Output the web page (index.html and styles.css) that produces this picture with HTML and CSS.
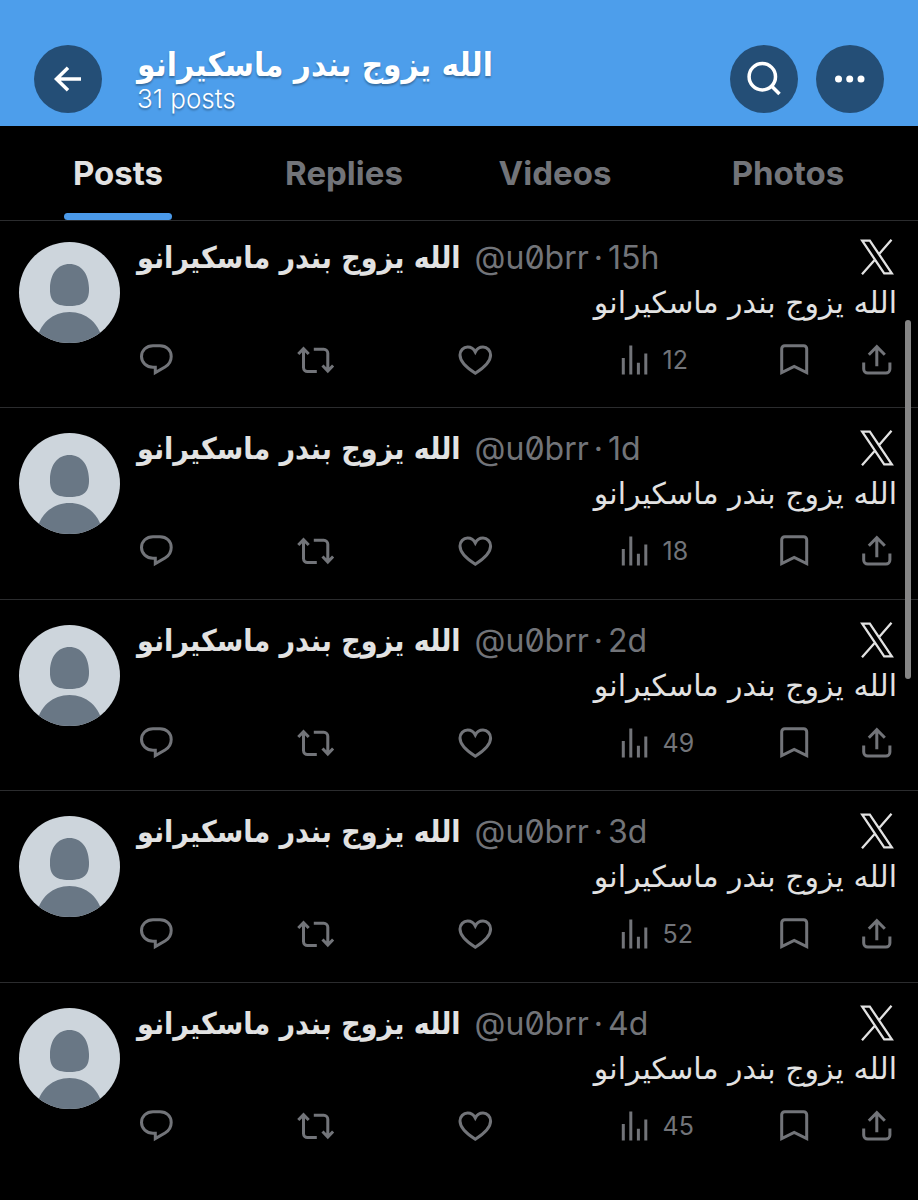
FILE: index.html
```html
<!DOCTYPE html>
<html lang="en">
<head>
    <meta charset="UTF-8">
    <meta name="viewport" content="width=device-width, initial-scale=1.0">
    <title>Profile posts</title>
    <link rel="stylesheet" href="styles.css">
</head>
<body>
    <svg class="sprite" aria-hidden="true">
        <symbol id="avatar" viewBox="0 0 101 101">
            <rect width="101" height="101" fill="#cdd5dc"/>
            <path fill="#697785" d="M50.500 22C62 22 69.500 31 70 46C70.400 58 66 64 50.500 64S30.600 58 31 46C31.500 31 39 22 50.500 22z"/>
            <path fill="#697785" d="M17 101C20 81 34 70 50.500 70S81 81 84 101z"/>
        </symbol>
        <symbol id="x-logo" viewBox="0 0 34 36">
            <path fill="none" stroke="currentColor" stroke-width="2.300" d="M2.200 1.600H9.800L31.800 34.400H24.200ZM31.500 0.800L18.700 15.600M15.300 20.300L2 35.200"/>
        </symbol>
        <symbol id="reply" viewBox="0 0 38 38">
            <path d="M18.300 26.200H16C9.500 26.200 4.500 21.500 4.500 15.500C4.500 9.300 9.500 4.700 16 4.700H23C29.600 4.700 34.200 9.300 34.200 15.400C34.200 20 32 23.500 28 26L18.300 31.600Z"/>
        </symbol>
        <symbol id="repost" viewBox="0 0 38 38">
            <path d="M1.300 13L6.500 7.600L11.700 13M6.500 8V26.500A4 4 0 0 0 10.500 30.500H19.800M16.800 8.300H26.800A4 4 0 0 1 30.800 12.300V30M25.500 24.500L30.800 30L36.100 24.500"/>
        </symbol>
        <symbol id="like" viewBox="0 0 38 38">
            <path d="M19.300 32.200C11.300 27.200 4 21 4 14C4 9.400 7.400 6.100 11.600 6.100C15 6.100 17.800 8 19.300 11C20.800 8 23.600 6.100 27 6.100C31.200 6.100 34.600 9.400 34.600 14C34.600 21 27.300 27.200 19.300 32.200Z"/>
        </symbol>
        <symbol id="views" viewBox="0 0 38 38">
            <path d="M7.300 17V33.500M14.800 4.500V33.500M22.400 21.800V33.500M29.800 12.500V33.500"/>
        </symbol>
        <symbol id="bookmark" viewBox="0 0 38 38">
            <path d="M6.700 31.500V7.700A3 3 0 0 1 9.700 4.700H28.700A3 3 0 0 1 31.700 7.700V31.500L19.200 25.500Z"/>
        </symbol>
        <symbol id="share" viewBox="0 0 38 38">
            <path d="M18.800 25.200V6M10.800 13.700L18.800 5.700L26.800 13.700M5.700 21.500V28A4 4 0 0 0 9.700 32H27.900A4 4 0 0 0 31.900 28V21.500"/>
        </symbol>
    </svg>

    <header class="header">
        <button class="round-btn" aria-label="Back">
            <svg viewBox="0 0 68 68"><path d="M47 34H22M34 22.800L22.500 34L34 45.200"/></svg>
        </button>
        <div class="header-title">
            <h1 dir="rtl" lang="ar">الله يزوج بندر ماسكيرانو</h1>
            <p>31 posts</p>
        </div>
        <button class="round-btn" aria-label="Search">
            <svg viewBox="0 0 68 68"><circle cx="32.300" cy="31.700" r="13.200"/><path d="M41.500 41L49.500 49"/></svg>
        </button>
        <button class="round-btn" aria-label="More">
            <svg viewBox="0 0 68 68" class="dots"><circle cx="22.500" cy="34" r="3.500"/><circle cx="33.700" cy="34" r="3.500"/><circle cx="45" cy="34" r="3.500"/></svg>
        </button>
    </header>

    <nav class="tabs" role="tablist">
        <button class="tab active" role="tab" aria-selected="true">Posts</button>
        <button class="tab" role="tab" aria-selected="false">Replies</button>
        <button class="tab" role="tab" aria-selected="false">Videos</button>
        <button class="tab" role="tab" aria-selected="false">Photos</button>
    </nav>

    <main id="timeline" class="timeline"></main>
    <div class="scroll-thumb"></div>

    <script>
        const posts = [
            { time: '15h', views: 12 },
            { time: '1d', views: 18 },
            { time: '2d', views: 49 },
            { time: '3d', views: 52 },
            { time: '4d', views: 45 }
        ];
        const text = 'الله يزوج بندر ماسكيرانو';

        function action(name, label, count) {
            return `<button class="action ${name}" aria-label="${label}"><svg><use href="#${name}"/></svg>${count ? `<span>${count}</span>` : ''}</button>`;
        }

        document.getElementById('timeline').innerHTML = posts.map(post => `
            <article class="post">
                <svg class="avatar"><use href="#avatar"/></svg>
                <div class="post-body">
                    <div class="post-head">
                        <strong class="name" dir="rtl" lang="ar">${text}</strong>
                        <span class="handle">@u0brr</span>
                        <span class="dot">·</span>
                        <span class="time">${post.time}</span>
                        <svg class="x-logo"><use href="#x-logo"/></svg>
                    </div>
                    <p class="post-text" dir="rtl" lang="ar">${text}</p>
                    <div class="actions">
                        ${action('reply', 'Reply')}
                        ${action('repost', 'Repost')}
                        ${action('like', 'Like')}
                        ${action('views', 'Views', post.views)}
                        ${action('bookmark', 'Bookmark')}
                        ${action('share', 'Share')}
                    </div>
                </div>
            </article>`).join('');
    </script>
</body>
</html>
```
FILE: styles.css
```css
* {
    box-sizing: border-box;
}
body {
    margin: 0;
    background-color: #000;
    color: #e2e2e2;
    font-family: Inter, "DejaVu Sans", sans-serif;
}
h1, p {
    margin: 0;
}
button {
    padding: 0;
    border: none;
    background: none;
    color: inherit;
    font-family: inherit;
    cursor: pointer;
}
.sprite {
    display: none;
}

/* header */
.header {
    display: flex;
    align-items: center;
    gap: 18px;
    padding: 45px 34px 13px;
    background-color: #4d9eeb;
    color: #fff;
}
.round-btn {
    flex: none;
    width: 68px;
    height: 68px;
    border-radius: 50%;
    background-color: #244e76;
}
.round-btn svg {
    display: block;
    width: 68px;
    height: 68px;
    fill: none;
    stroke: #fff;
    stroke-width: 3.5;
}
.round-btn .dots {
    fill: #fff;
    stroke: none;
}
.header-title {
    flex: 1;
    padding-left: 17px;
    text-align: left;
    text-shadow: 0 2px 2px rgba(0, 0, 0, 0.3);
}
.header-title h1 {
    font-family: "DejaVu Sans Condensed", "DejaVu Sans", sans-serif;
    font-size: 33px;
    line-height: 40px;
    text-align: left;
    white-space: nowrap;
}
.header-title p {
    font-size: 26px;
    font-weight: 300;
    line-height: 28px;
}

/* tabs */
.tabs {
    display: grid;
    grid-template-columns: 236fr 216fr 206fr 260fr;
    border-bottom: 1px solid #2b2c2e;
}
.tab {
    position: relative;
    height: 94px;
    color: #727479;
    font-size: 33px;
    font-weight: 700;
}
.tab.active {
    color: #e2e2e2;
}
.tab.active::after {
    content: "";
    position: absolute;
    bottom: 0;
    left: 50%;
    width: 108px;
    height: 7px;
    margin-left: -54px;
    border-radius: 4px;
    background-color: #4a99e9;
}

/* posts */
.post {
    display: flex;
    gap: 17px;
    padding: 25px 21px 28px 19px;
    border-bottom: 1px solid #2b2c2e;
}
.post:first-child {
    padding-top: 21px;
}
.post:nth-child(even) {
    padding-bottom: 29px;
}
.post:last-child {
    border-bottom: none;
}
.avatar {
    flex: none;
    width: 101px;
    height: 101px;
    border-radius: 50%;
}
.post-body {
    flex: 1;
    min-width: 0;
    margin-top: -8px;
}
.post-head {
    display: flex;
    align-items: center;
    height: 46px;
    color: #727479;
    font-size: 32px;
    white-space: nowrap;
}
.name {
    margin-right: 14px;
    color: #e2e2e2;
    font-family: "DejaVu Sans Condensed", "DejaVu Sans", sans-serif;
    font-size: 30px;
}
.handle {
    font-feature-settings: "zero";
}
.dot {
    margin: 0 5px;
}
.x-logo {
    width: 34px;
    height: 36px;
    margin-left: auto;
    margin-right: 3px;
    color: #e2e2e2;
}
.post-text {
    font-family: "DejaVu Sans", sans-serif;
    font-size: 30px;
    line-height: 46px;
}
.actions {
    display: flex;
    margin-top: 15px;
    color: #727479;
}
.action {
    display: flex;
    flex: 1;
    align-items: center;
    gap: 9px;
    font-size: 25px;
    line-height: 38px;
}
.action svg {
    flex: none;
    width: 38px;
    height: 38px;
    fill: none;
    stroke: currentColor;
    stroke-width: 3;
}
.bookmark {
    flex: 0 0 83px;
}
.share {
    flex: 0 0 39px;
}

.scroll-thumb {
    position: absolute;
    top: 320px;
    right: 7px;
    width: 6px;
    height: 359px;
    border-radius: 3px;
    background-color: #858585;
}
```
